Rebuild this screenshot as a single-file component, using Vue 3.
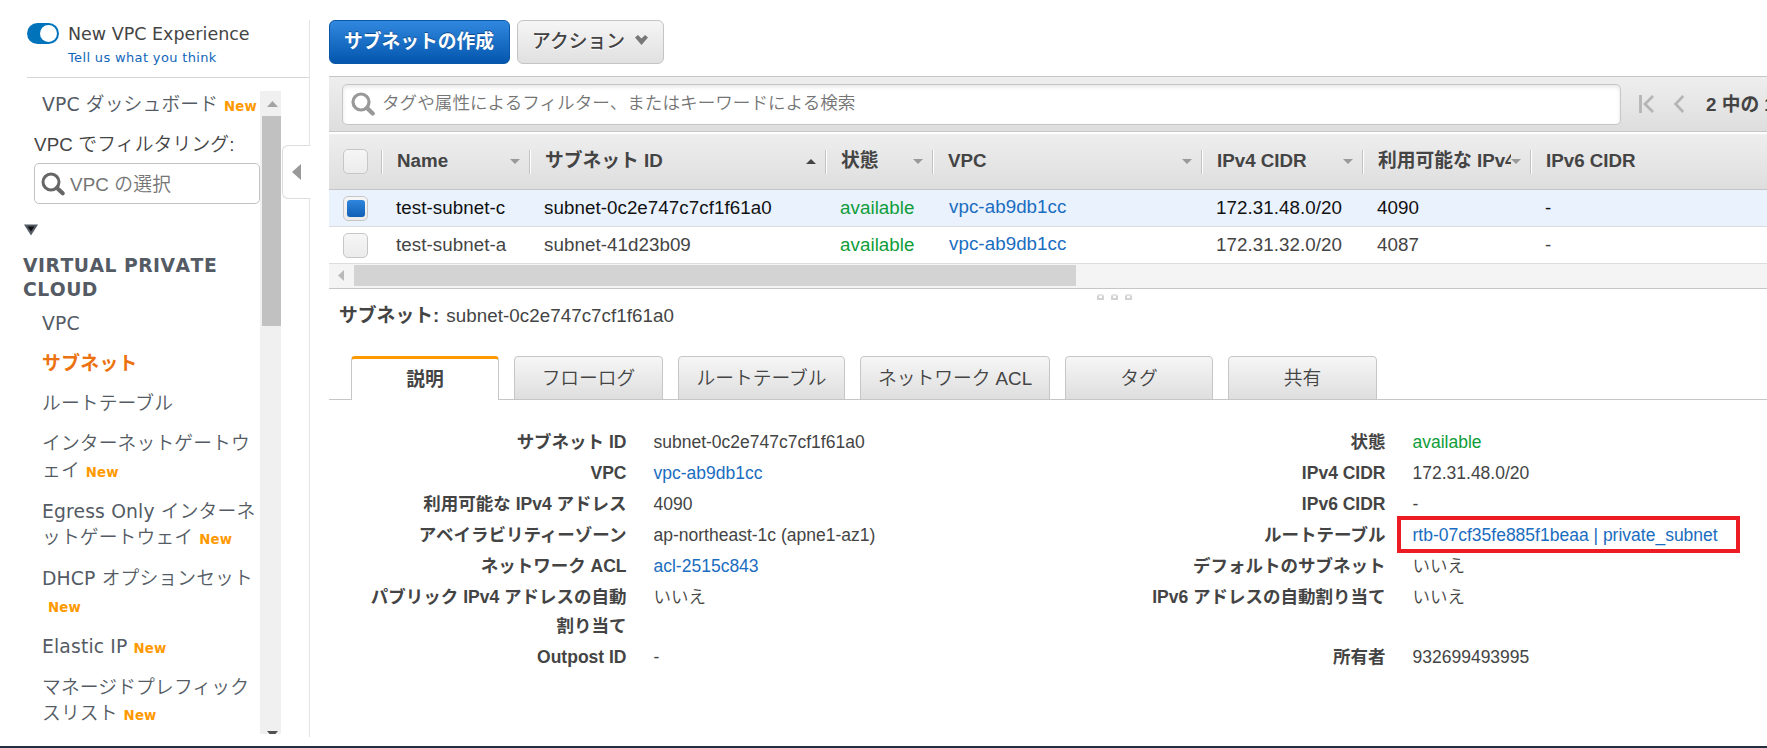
<script setup>
import { ref } from 'vue'

const navItems = [
  { lines: ['VPC'] },
  { lines: ['サブネット'], active: true },
  { lines: ['ルートテーブル'] },
  { lines: ['インターネットゲートウ', 'ェイ'], isNew: true },
  { lines: ['Egress Only インターネ', 'ットゲートウェイ'], isNew: true },
  { lines: ['DHCP オプションセット', ''], isNew: true },
  { lines: ['Elastic IP'], isNew: true },
  { lines: ['マネージドプレフィック', 'スリスト'], isNew: true }
]

const columns = [
  { label: 'Name', sort: 'down' },
  { label: 'サブネット ID', sort: 'up' },
  { label: '状態', sort: 'down' },
  { label: 'VPC', sort: 'down' },
  { label: 'IPv4 CIDR', sort: 'down' },
  { label: '利用可能な IPv4', sort: 'down' },
  { label: 'IPv6 CIDR' }
]

const subnets = [
  {
    name: 'test-subnet-c',
    id: 'subnet-0c2e747c7cf1f61a0',
    state: 'available',
    vpc: 'vpc-ab9db1cc',
    cidr: '172.31.48.0/20',
    ips: '4090'
  },
  {
    name: 'test-subnet-a',
    id: 'subnet-41d23b09',
    state: 'available',
    vpc: 'vpc-ab9db1cc',
    cidr: '172.31.32.0/20',
    ips: '4087'
  }
]

const selected = ref(0)

const tabs = ['説明', 'フローログ', 'ルートテーブル', 'ネットワーク ACL', 'タグ', '共有']
const currentTab = ref(0)

const details = [
  [
    { label: 'サブネット ID', value: 'subnet-0c2e747c7cf1f61a0' },
    { label: 'VPC', value: 'vpc-ab9db1cc', type: 'link' },
    { label: '利用可能な IPv4 アドレス', value: '4090' },
    { label: 'アベイラビリティーゾーン', value: 'ap-northeast-1c (apne1-az1)' },
    { label: 'ネットワーク ACL', value: 'acl-2515c843', type: 'link' },
    { label: 'パブリック IPv4 アドレスの自動割り当て', value: 'いいえ', tall: true },
    { label: 'Outpost ID', value: '-' }
  ],
  [
    { label: '状態', value: 'available', type: 'ok' },
    { label: 'IPv4 CIDR', value: '172.31.48.0/20' },
    { label: 'IPv6 CIDR', value: '-' },
    { label: 'ルートテーブル', value: 'rtb-07cf35fe885f1beaa | private_subnet', type: 'link', marked: true },
    { label: 'デフォルトのサブネット', value: 'いいえ' },
    { label: 'IPv6 アドレスの自動割り当て', value: 'いいえ', tall: true },
    { label: '所有者', value: '932699493995' }
  ]
]
</script>

<template>
  <div class="console">
    <aside class="sidebar">
      <header class="experience">
        <span class="toggle"><i></i></span>
        <div>
          <div class="experience-title">New VPC Experience</div>
          <a class="feedback">Tell us what you think</a>
        </div>
      </header>

      <div class="nav-wrap">
        <nav class="nav">
          <a class="dashboard">VPC ダッシュボード<span class="new">New</span></a>
          <label class="filter-label">VPC でフィルタリング:</label>
          <div class="filter">
            <svg width="25" height="25" viewBox="0 0 25 25">
              <circle cx="10" cy="10" r="8" fill="none" stroke="#666" stroke-width="3" />
              <path d="M16 16 L21.7 21.3" stroke="#666" stroke-width="4.2" stroke-linecap="round" />
            </svg>
            <span>VPC の選択</span>
          </div>
          <svg class="caret" width="14" height="12" viewBox="0 0 14 12">
            <path d="M0 .5 H14 L7 11.5 Z" fill="#545b64" />
            <path d="M3.5 2.5 H10.5 L7 7.5 Z" fill="#111" />
          </svg>
          <h2>VIRTUAL PRIVATE<br />CLOUD</h2>
          <a
            v-for="item in navItems"
            :key="item.lines[0]"
            class="nav-item"
            :class="{ active: item.active, fresh: item.isNew }"
          >
            <div v-for="(line, i) in item.lines" :key="i" class="nav-line">
              {{ line }}<span v-if="item.isNew && i === item.lines.length - 1" class="new">New</span>
            </div>
          </a>
        </nav>
        <div class="vscroll">
          <svg width="21" height="25" viewBox="0 0 21 25"><path d="M7 16 L12.5 10 L18 16 Z" fill="#a3a3a3" /></svg>
          <div class="vthumb"></div>
          <svg class="vend" width="21" height="3" viewBox="0 0 21 3"><path d="M7 0 H18 L15.4 3 H9.6 Z" fill="#505050" /></svg>
        </div>
      </div>

      <div class="collapse">
        <svg width="9" height="16" viewBox="0 0 9 16"><path d="M9 0 V16 L0 8 Z" fill="#999" /></svg>
      </div>
    </aside>

    <main class="main">
      <div class="actions">
        <button class="btn primary">サブネットの作成</button>
        <button class="btn">
          アクション
          <svg width="13" height="10" viewBox="0 0 13 10"><path d="M0 2.5 L3 0 L6.5 3.5 L10 0 L13 2.5 L6.5 10 Z" fill="#777" /></svg>
        </button>
      </div>

      <div class="toolbar">
        <div class="search">
          <svg width="25" height="25" viewBox="0 0 25 25">
            <circle cx="10" cy="10" r="8" fill="none" stroke="#999" stroke-width="3.2" />
            <path d="M16 16 L21.7 21.5" stroke="#999" stroke-width="4.4" stroke-linecap="round" />
          </svg>
          <span>タグや属性によるフィルター、またはキーワードによる検索</span>
        </div>
        <svg class="first" width="15" height="18" viewBox="0 0 15 18">
          <path d="M1.5 0 V18 M14 1 L6 9 L14 17" fill="none" stroke="#b5b5b5" stroke-width="2.8" />
        </svg>
        <svg class="prev" width="10" height="18" viewBox="0 0 10 18">
          <path d="M9.3 1 L1.6 9 L9.3 17" fill="none" stroke="#b5b5b5" stroke-width="2.8" />
        </svg>
        <span class="range">2 中の 1</span>
      </div>

      <div class="grid-row grid-head">
        <div class="check-cell"><span class="check"></span></div>
        <div v-for="col in columns" :key="col.label" class="head-cell">
          <span class="head-label">{{ col.label }}</span>
          <i v-if="col.sort" :class="['sort', col.sort]"></i>
        </div>
      </div>
      <div
        v-for="(row, i) in subnets"
        :key="row.id"
        class="grid-row grid-body"
        :class="{ selected: i === selected }"
        @click="selected = i"
      >
        <div class="check-cell"><span class="check"><i v-if="i === selected"></i></span></div>
        <div class="cell">{{ row.name }}</div>
        <div class="cell">{{ row.id }}</div>
        <div class="cell ok">{{ row.state }}</div>
        <div class="cell link">{{ row.vpc }}</div>
        <div class="cell">{{ row.cidr }}</div>
        <div class="cell">{{ row.ips }}</div>
        <div class="cell">-</div>
      </div>
      <div class="hscroll">
        <svg width="25" height="21" viewBox="0 0 25 21"><path d="M15 5 V16 L9 10.5 Z" fill="#b9b9b9" /></svg>
        <div class="hthumb"></div>
      </div>
      <div class="grip"><i></i><i></i><i></i></div>

      <div class="detail-title"><b>サブネット:</b><span>subnet-0c2e747c7cf1f61a0</span></div>

      <div class="tabs">
        <div
          v-for="(tab, i) in tabs"
          :key="tab"
          class="tab"
          :class="[`tab-${i}`, { current: i === currentTab }]"
          @click="currentTab = i"
        >
          {{ tab }}
        </div>
      </div>

      <div class="details">
        <dl v-for="(group, g) in details" :key="g">
          <div v-for="item in group" :key="item.label" class="detail" :class="{ tall: item.tall }">
            <dt>{{ item.label }}</dt>
            <dd :class="[item.type, { marked: item.marked }]">{{ item.value }}</dd>
          </div>
        </dl>
      </div>
    </main>
    <div class="footer-edge"></div>
  </div>
</template>

<style>
body {
  margin: 0;
  background: #fff;
}
</style>

<style scoped>
*,
*::after {
  box-sizing: border-box;
}

.console {
  position: relative;
  display: flex;
  width: 1767px;
  height: 748px;
  overflow: hidden;
  padding-top: 20px;
  color: #444;
  font-family: 'Liberation Sans', 'Noto Sans CJK JP', sans-serif;
  font-size: 18.75px;
  white-space: nowrap;
}

svg {
  display: block;
  flex: none;
}

/* sidebar */
.sidebar {
  position: relative;
  flex: none;
  width: 310px;
  height: 717px;
  padding-left: 20px;
  border-right: 1px solid #e4e4e4;
}

.experience {
  display: flex;
  height: 58px;
  margin-left: 7px;
  border-bottom: 1px solid #d5d5d5;
  font-family: 'DejaVu Sans', sans-serif;
}

.toggle {
  flex: none;
  width: 32px;
  height: 21px;
  margin: 3px 9px 0 0;
  padding: 2px;
  border-radius: 11px;
  background: #0073bb;
}

.toggle i {
  display: block;
  width: 17px;
  height: 17px;
  margin-left: 11px;
  border-radius: 50%;
  background: #fff;
}

.experience-title {
  padding-top: 2px;
  font-size: 17.5px;
  line-height: 24px;
}

.feedback {
  display: block;
  color: #1166bb;
  font-size: 13px;
  letter-spacing: 0.35px;
  line-height: 24px;
}

.nav-wrap {
  display: flex;
  justify-content: space-between;
  width: 261px;
  height: 643px;
  margin-top: 13px;
  overflow: hidden;
}

.nav {
  display: flex;
  flex-direction: column;
  width: 240px;
  color: #545b64;
  font-family: 'DejaVu Sans', 'Noto Sans CJK JP DemiLight', 'Noto Sans CJK JP', sans-serif;
  font-size: 18.75px;
  letter-spacing: 0.15px;
}

.nav > * {
  flex: none;
}

.dashboard {
  padding-left: 22px;
  line-height: 27px;
}

.new {
  margin-left: 6px;
  color: #ff9900;
  font-size: 13.3px;
  font-weight: 700;
}

.filter-label {
  margin: 11px 0 0 14px;
  color: #444;
  font-family: 'Liberation Sans', 'Noto Sans CJK JP DemiLight', 'Noto Sans CJK JP', sans-serif;
  line-height: 27px;
}

.filter {
  display: flex;
  align-items: center;
  gap: 4px;
  width: 226px;
  height: 41px;
  margin: 5px 0 0 14px;
  padding: 0 0 3px 6px;
  border: 1px solid #c3c3c3;
  border-radius: 5px;
  background: #fff;
  color: #757575;
  font-family: 'Liberation Sans', 'Noto Sans CJK JP DemiLight', 'Noto Sans CJK JP', sans-serif;
}

.filter svg {
  margin-top: 4px;
}

.caret {
  margin: 20px 0 0 4px;
}

h2 {
  margin: 18px 0 0 3px;
  font-size: 18.75px;
  font-weight: 700;
  font-kerning: none;
  letter-spacing: 0.5px;
  line-height: 24px;
}

.nav-item {
  display: block;
  margin-bottom: 13.5px;
  padding-left: 22px;
  line-height: 26.5px;
}

.nav-item.fresh {
  margin-bottom: 14.5px;
}

h2 + .nav-item {
  margin-top: 9px;
}

.nav-line {
  height: 26.5px;
}

.nav-item.active {
  color: #ec7211;
  font-family: 'DejaVu Sans', 'Noto Sans CJK JP', sans-serif;
  font-weight: 700;
  letter-spacing: 0.4px;
}

.vscroll {
  display: flex;
  flex-direction: column;
  width: 21px;
  background: #f0f0f0;
}

.vthumb {
  height: 210px;
  margin-left: 2px;
  background: #c1c1c1;
}

.vend {
  margin-top: auto;
}

/* handle that sits over the sidebar edge */
.collapse {
  position: absolute;
  top: 125px;
  right: -1px;
  display: flex;
  align-items: center;
  width: 28px;
  height: 54px;
  padding-left: 9px;
  border: 1px solid #ddd;
  border-right: 0;
  border-radius: 6px 0 0 6px;
  background: #fff;
}

/* main */
.main {
  flex: none;
  width: 1438px;
  margin-left: 19px;
}

.actions {
  display: flex;
  gap: 7px;
}

.btn {
  display: flex;
  align-items: center;
  justify-content: center;
  gap: 10px;
  width: 147px;
  height: 44px;
  padding: 0 1px 5px 0;
  border: 1px solid #c4c4c4;
  border-radius: 6px;
  background: linear-gradient(#f5f5f5, #e0e0e0);
  color: #444;
  font-family: inherit;
  font-size: 18.75px;
  font-weight: 500;
  text-shadow: 0 1px 0 #fff;
}

.btn.primary {
  width: 181px;
  border-color: #0a57a8;
  background: linear-gradient(#3088de, #0456ad);
  color: #fff;
  font-weight: 700;
  text-shadow: 0 -1px 0 #0b4a8c;
}

.toolbar {
  display: flex;
  align-items: center;
  height: 56px;
  margin-top: 12px;
  padding-left: 13px;
  border: solid #c6c6c6;
  border-width: 1px 0;
  background: linear-gradient(#eeeeee, #dedede);
}

.search {
  display: flex;
  flex: none;
  align-items: center;
  gap: 6px;
  width: 1279px;
  height: 41px;
  padding-left: 8px;
  border: 1px solid #c6c6c6;
  border-radius: 5px;
  background: #fff;
  box-shadow: inset 0 2px 4px rgba(0, 0, 0, 0.1);
  color: #757575;
  font-family: 'Noto Sans CJK JP DemiLight', 'Noto Sans CJK JP', sans-serif;
  font-size: 17.6px;
}

.search span {
  padding-bottom: 5px;
}

.first {
  margin-left: 18px;
}

.prev {
  margin-left: 20px;
}

.range {
  margin-left: 22px;
  padding-bottom: 4px;
  font-weight: 700;
}

.grid-row {
  display: grid;
  grid-template-columns: 52px 148px 296px 107px 269px 161px 168px 237px;
}

.grid-head {
  align-items: center;
  height: 56px;
  margin-top: 2px;
  border-bottom: 1px solid #c6c6c6;
  background: linear-gradient(#eeeeee, #dedede);
  font-weight: 700;
}

.head-cell {
  display: flex;
  align-items: center;
  justify-content: space-between;
  height: 24px;
  min-width: 0;
  padding: 0 9px 0 15px;
  border-left: 1px solid #c2c2c2;
  box-shadow: inset 1px 0 0 #fff;
}

.head-label {
  overflow: hidden;
  padding-bottom: 1px;
  line-height: 28px;
}

.sort {
  flex: none;
  border: 5px solid transparent;
  border-bottom-width: 0;
  border-top: 5px solid #999;
}

.sort.up {
  border-top: 0;
  border-bottom: 5px solid #444;
}

.check-cell {
  padding-left: 14px;
}

.check {
  display: flex;
  align-items: center;
  justify-content: center;
  width: 25px;
  height: 25px;
  border: 1px solid #c6c6c6;
  border-radius: 5px;
  background: linear-gradient(#f6f6f6, #ebebeb);
}

.check i {
  width: 18px;
  height: 17px;
  border-radius: 3px;
  background: linear-gradient(#2f86dc, #0f5fb5);
}

.grid-body {
  align-items: center;
  height: 37px;
  padding-bottom: 2px;
  border-bottom: 1px solid #ddd;
}

.grid-body.selected {
  background: #eaf2fe;
  color: #111;
}

.cell {
  padding-left: 15px;
  letter-spacing: 0.06px;
  line-height: 34px;
}

.cell:nth-child(5) {
  padding-left: 17px;
  padding-bottom: 2px;
}

.cell:nth-child(8) {
  padding-left: 15px;
}

.ok,
.selected .ok {
  color: #0f9d3a;
}

.link,
.selected .link {
  color: #1a6dc0;
}

.hscroll {
  display: flex;
  height: 25px;
  padding-top: 1px;
  border-bottom: 1px solid #c6c6c6;
  background: #f4f4f4;
}

.hthumb {
  width: 722px;
  height: 21px;
  background: #d3d3d3;
}

.grip {
  display: flex;
  gap: 7px;
  height: 12px;
  padding: 5px 0 0 768px;
}

.grip i {
  width: 7px;
  height: 6px;
  border: 2px solid #d2d2d2;
  border-top-color: #e2e2e2;
  border-radius: 3px 3px 1px 1px;
}

.detail-title {
  display: flex;
  align-items: baseline;
  gap: 7px;
  height: 28px;
  padding-left: 10px;
  letter-spacing: 0.06px;
  line-height: 30px;
}

.tabs {
  display: flex;
  gap: 15px;
  height: 44px;
  margin-top: 27px;
  padding-left: 22px;
  background: linear-gradient(#c6c6c6, #c6c6c6) bottom / 100% 1px no-repeat;
}

.tab {
  display: flex;
  align-items: center;
  justify-content: center;
  width: 149px;
  padding-bottom: 4px;
  border: 1px solid #c6c6c6;
  border-radius: 4px 4px 0 0;
  background: linear-gradient(#f6f6f6, #dedede);
  font-family: 'Liberation Sans', 'Noto Sans CJK JP DemiLight', 'Noto Sans CJK JP', sans-serif;
}

.tab.current {
  width: 148px;
  padding-bottom: 4px;
  border-top: 3px solid #ff9900;
  border-bottom: 0;
  background: #fff;
  font-family: 'Liberation Sans', 'Noto Sans CJK JP', sans-serif;
  font-weight: 700;
}

.tab-2 {
  width: 167px;
}

.tab-3 {
  width: 190px;
}

.tab-4 {
  width: 148px;
}

.details {
  display: flex;
  padding-top: 28px;
  font-size: 17.5px;
}

dl {
  flex: none;
  width: 759px;
  margin: 0;
}

.detail {
  display: flex;
  height: 31px;
  line-height: 28.5px;
}

.detail.tall {
  height: 60px;
}

dt {
  flex: none;
  width: 270px;
  margin-left: 27.5px;
  font-weight: 700;
  text-align: right;
  white-space: normal;
}

dd {
  position: relative;
  margin: 0 0 0 27px;
  font-family: 'Liberation Sans', 'Noto Sans CJK JP DemiLight', 'Noto Sans CJK JP', sans-serif;
}

/* annotation frame drawn over the row */
.marked::after {
  position: absolute;
  top: -5px;
  left: -15.5px;
  width: 343px;
  height: 37px;
  border: 4px solid #ed1c24;
  content: '';
}

.footer-edge {
  position: absolute;
  bottom: 0;
  left: 0;
  width: 100%;
  height: 2px;
  background: #232f3e;
}
</style>
